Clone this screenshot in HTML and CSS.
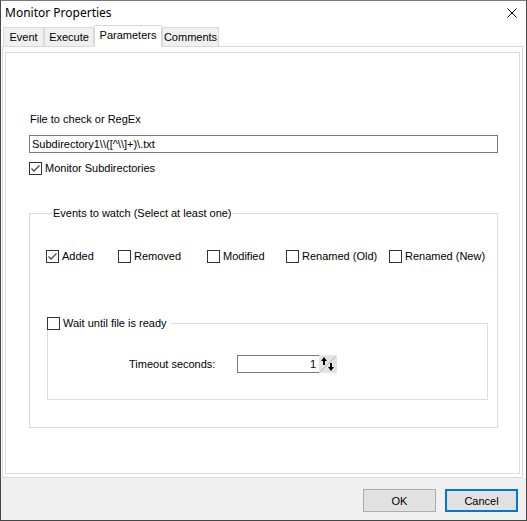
FILE: index.html
```html
<!DOCTYPE html>
<html lang="en">
<head>
<meta charset="utf-8">
<title>Monitor Properties</title>
<link rel="stylesheet" href="styles.css">
</head>
<body>
<div class="window">
  <div class="titlebar">
    <span class="title">Monitor Properties</span>
    <svg class="close" width="10" height="10" viewBox="0 0 10 10"><path d="M0.5 0.5L9.5 9.5M9.5 0.5L0.5 9.5" stroke="#000" stroke-width="1" fill="none"/></svg>
  </div>

  <div class="tabs">
    <div class="tab tab-event">Event</div>
    <div class="tab tab-execute">Execute</div>
    <div class="tab tab-params active">Parameters</div>
    <div class="tab tab-comments">Comments</div>
  </div>

  <div class="panel">
    <div class="page">
      <div class="field-label">File to check or RegEx</div>
      <div class="textbox">Subdirectory1\\([^\\]+)\.txt</div>
      <label class="check subdirs"><span class="box checked"><svg width="11" height="11" viewBox="0 0 11 11"><path d="M1.5 5.5L4 8L9.5 2.5" stroke="#4a4a4a" stroke-width="1.3" fill="none"/></svg></span>Monitor Subdirectories</label>

      <fieldset class="group events">
        <legend class="group-title">Events to watch (Select at least one)</legend>
        <div class="event-row">
          <label class="check"><span class="box checked"><svg width="11" height="11" viewBox="0 0 11 11"><path d="M1.5 5.5L4 8L9.5 2.5" stroke="#4a4a4a" stroke-width="1.3" fill="none"/></svg></span>Added</label>
          <label class="check"><span class="box"></span>Removed</label>
          <label class="check"><span class="box"></span>Modified</label>
          <label class="check"><span class="box"></span>Renamed (Old)</label>
          <label class="check"><span class="box"></span>Renamed (New)</label>
        </div>

        <fieldset class="group wait">
          <legend class="wait-title"><label class="check"><span class="box"></span>Wait until file is ready</label></legend>
          <div class="timeout-row">
            <span class="timeout-label">Timeout seconds:</span>
            <div class="spin">
              <div class="spin-value">1</div>
              <svg class="spin-btn" width="18" height="18" viewBox="0 0 18 18">
                <rect x="0" y="0" width="18" height="18" fill="#e3e3e3"/>
                <path d="M1.5 16.5L16.5 1.5" stroke="#b4b4b4" stroke-width="1"/>
                <path d="M5 2L2 6H8Z" fill="#000"/>
                <path d="M5 5.5V10" stroke="#000" stroke-width="2"/>
                <path d="M12 16L9 12H15Z" fill="#000"/>
                <path d="M12 8V12.5" stroke="#000" stroke-width="2"/>
              </svg>
            </div>
          </div>
        </fieldset>
      </fieldset>
    </div>
  </div>

  <div class="footer">
    <button class="btn">OK</button>
    <button class="btn default">Cancel</button>
  </div>
</div>
</body>
</html>
```

FILE: styles.css
```css
html, body {
  margin: 0;
  padding: 0;
  background: #ffffff;
}

body {
  font-family: "Liberation Sans", Arial, sans-serif;
  font-size: 11px;
  color: #000;
}

.window {
  width: 527px;
  height: 521px;
  box-sizing: border-box;
  border: 1px solid #474747;
  border-top-color: #7a7a7a;
  background: #ffffff;
  display: flex;
  flex-direction: column;
}

/* title bar */
.titlebar {
  height: 24px;
  flex: none;
  display: flex;
  align-items: center;
  justify-content: space-between;
  padding: 0 9px 0 4px;
}

.title {
  font-family: "Noto Sans", "Open Sans", sans-serif;
  font-size: 12px;
  line-height: 16px;
}

.close {
  display: block;
}

/* tab strip */
.tabs {
  flex: none;
  height: 22px;
  margin-bottom: -1px;
  padding-left: 2px;
  display: flex;
  align-items: flex-end;
  position: relative;
  z-index: 1;
}

.tab {
  box-sizing: border-box;
  height: 20px;
  border: 1px solid #d9d9d9;
  background: #f0f0f0;
  text-align: center;
  line-height: 18px;
}

.tab + .tab {
  margin-left: 0;
}

.tab-event { width: 41px; }
.tab-execute { width: 50px; }
.tab-params { width: 68px; }
.tab-comments { width: 57px; }

.tab.active {
  height: 22px;
  background: #ffffff;
  border-bottom-color: #ffffff;
  line-height: 18px;
}

/* tab page */
.panel {
  flex: none;
  height: 432px;
  box-sizing: border-box;
  margin: 0 3px 0 1px;
  border: 1px solid #d9d9d9;
  background: #ffffff;
  padding: 5px 2px 3px 2px;
}

.page {
  height: 100%;
  box-sizing: border-box;
  border: 1px solid #dcdcdc;
  padding: 60px 0 0 23px;
}

.field-label {
  line-height: 13px;
  margin-left: 1px;
}

.textbox {
  box-sizing: border-box;
  width: 469px;
  height: 18px;
  margin-top: 9px;
  border: 1px solid #7a7a7a;
  padding-left: 2px;
  line-height: 16px;
  white-space: pre;
}

.check {
  display: flex;
  align-items: center;
  height: 13px;
  line-height: 13px;
  white-space: nowrap;
}

.box {
  box-sizing: border-box;
  width: 13px;
  height: 13px;
  border: 1px solid #333333;
  background: #ffffff;
  margin-right: 3px;
  flex: none;
  display: flex;
  align-items: center;
  justify-content: center;
}

.box svg {
  display: block;
}

.subdirs {
  margin-top: 9px;
}

/* group boxes */
.group {
  margin: 0;
  border: 1px solid #dcdcdc;
  min-width: 0;
}

.events {
  width: 469px;
  box-sizing: border-box;
  margin-top: 32px;
  padding: 0 0 27px 16px;
}

.group-title {
  padding: 0 1px;
  margin-left: 6px;
  line-height: 13px;
}

.event-row {
  margin-top: 30px;
  display: grid;
  grid-template-columns: 72px 89px 79px 103px auto;
}

.wait {
  width: 441px;
  box-sizing: border-box;
  margin: 54px 0 0 1px;
  padding: 0 0 26px 0;
}

.wait-title {
  padding: 0 4px 0 0;
  margin-left: -1px;
  line-height: 13px;
}

.timeout-row {
  margin-top: 25px;
  display: flex;
  align-items: center;
  height: 18px;
}

.timeout-label {
  margin-left: 81px;
  width: 108px;
}

.spin {
  display: flex;
}

.spin-value {
  box-sizing: border-box;
  width: 82px;
  height: 18px;
  border: 1px solid #7a7a7a;
  border-right: none;
  text-align: right;
  padding-right: 3px;
  line-height: 16px;
}

.spin-btn {
  display: block;
}

/* dialog buttons */
.footer {
  flex: 1;
  background: #f0f0f0;
  display: flex;
  justify-content: flex-end;
  align-items: flex-start;
  padding: 11px 8px 0 0;
  gap: 9px;
}

.btn {
  box-sizing: border-box;
  width: 73px;
  height: 23px;
  margin: 0;
  padding: 0;
  border: 1px solid #adadad;
  background: #e1e1e1;
  font-family: "Liberation Sans", Arial, sans-serif;
  font-size: 11px;
  color: #000;
}

.btn.default {
  border: 2px solid #0078d7;
}
```
